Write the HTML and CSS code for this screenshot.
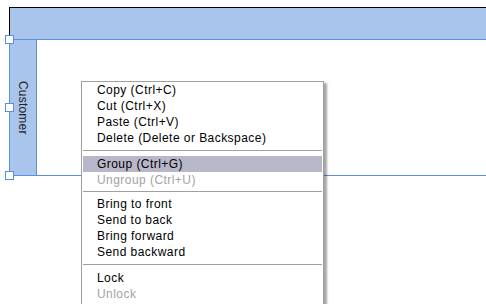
FILE: index.html
```html
<!DOCTYPE html>
<html lang="en">
<head>
    <meta charset="UTF-8">
    <meta name="viewport" content="width=device-width, initial-scale=1.0">
    <title>Swimlane context menu</title>
    <link rel="stylesheet" href="styles.css">
</head>
<body>
    <div class="canvas">
        <div class="pool">
            <div class="pool-header"></div>
            <div class="lane">
                <div class="lane-label">Customer</div>
                <div class="lane-body"></div>
            </div>
        </div>

        <div class="handle handle-top"></div>
        <div class="handle handle-mid"></div>
        <div class="handle handle-bottom"></div>

        <ul class="menu">
            <li class="item">Copy (Ctrl+C)</li>
            <li class="item">Cut (Ctrl+X)</li>
            <li class="item">Paste (Ctrl+V)</li>
            <li class="item">Delete (Delete or Backspace)</li>
            <li class="sep"></li>
            <li class="item active">Group (Ctrl+G)</li>
            <li class="item disabled">Ungroup (Ctrl+U)</li>
            <li class="sep sep-tight"></li>
            <li class="item">Bring to front</li>
            <li class="item">Send to back</li>
            <li class="item">Bring forward</li>
            <li class="item">Send backward</li>
            <li class="sep"></li>
            <li class="item">Lock</li>
            <li class="item disabled">Unlock</li>
        </ul>
    </div>
</body>
</html>
```

FILE: styles.css
```css
body {
    margin: 0;
    background-color: #fff;
    font-family: "Liberation Sans", Arial, sans-serif;
    overflow: hidden;
}
.canvas {
    position: relative;
    width: 486px;
    height: 304px;
}
.pool {
    padding: 7px 0 0 9px;
}
.pool-header {
    height: 31px;
    background-color: #a9c5eb;
    border-top: 1px solid #000;
    border-left: 1px solid #000;
    border-bottom: 1px solid #5b8ee2;
}
.lane {
    display: flex;
    height: 135px;
    border-bottom: 1px solid #5b8ee2;
}
.lane-label {
    width: 26px;
    background-color: #a9c5eb;
    border-left: 1px solid #5b8ee2;
    border-right: 1px solid #5b8ee2;
    writing-mode: vertical-rl;
    text-align: center;
    line-height: 26px;
    font-size: 12px;
    letter-spacing: 0.2px;
    color: #222;
}
.lane-body {
    flex: 1;
}
.handle {
    position: absolute;
    left: 5px;
    width: 7px;
    height: 7px;
    background-color: #fff;
    border: 1px solid #5b8ee2;
}
.handle-top {
    top: 35px;
}
.handle-mid {
    top: 103px;
}
.handle-bottom {
    top: 171px;
}
.menu {
    position: absolute;
    left: 81px;
    top: 81px;
    width: 243px;
    box-sizing: border-box;
    margin: 0;
    padding: 0 1px 20px;
    list-style: none;
    background-color: #fff;
    border: 1px solid #a0a0a0;
    box-shadow: 3px 2px 2px rgba(0, 0, 0, 0.35);
    font-size: 12px;
    letter-spacing: 0.45px;
    color: #000;
}
.item {
    height: 16px;
    line-height: 16px;
    padding-left: 14px;
    white-space: nowrap;
}
.item.active {
    background-color: #b8b7c9;
}
.item.disabled {
    color: #a3a3a3;
}
.sep {
    height: 1px;
    margin: 4px 0 5px;
    background-color: #a0a0a0;
}
.sep-tight {
    margin: 3px 0 4px;
}
```
